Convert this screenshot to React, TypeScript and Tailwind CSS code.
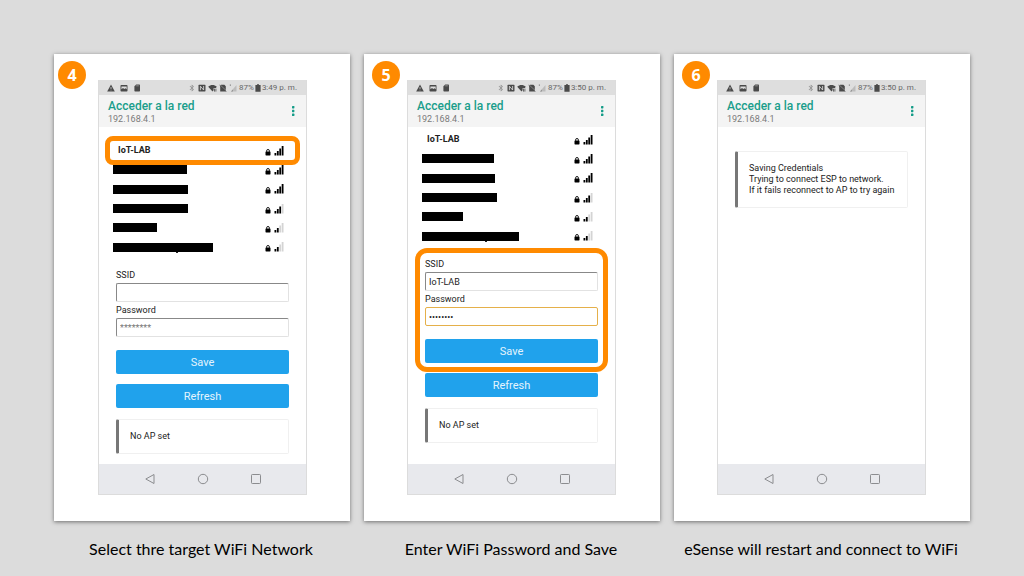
import { useId } from 'react';
import type { ReactNode } from 'react';
import { MdBluetooth } from 'react-icons/md';

type Network = { name?: string; redacted?: number; remnant?: boolean; strength: number };

const firstNetworks: Network[] = [
  { name: 'IoT-LAB', strength: 4 },
  { redacted: 74, strength: 4 },
  { redacted: 75, strength: 4 },
  { redacted: 75, strength: 3 },
  { redacted: 44, strength: 2 },
  { redacted: 100, strength: 2, remnant: true },
];

const secondNetworks: Network[] = [
  { name: 'IoT-LAB', strength: 4 },
  { redacted: 72, strength: 4 },
  { redacted: 73, strength: 4 },
  { redacted: 75, strength: 3 },
  { redacted: 41, strength: 2 },
  { redacted: 97, strength: 2, remnant: true },
];

function WarningIcon() {
  return (
    <svg viewBox="0 0 8 8" className="size-2" aria-hidden="true">
      <path fill="currentColor" d="M4 .6 7.800 7.400H.2z" />
      <path stroke="#dedede" strokeWidth=".7" d="M4 3v2M4 5.700v.7" />
    </svg>
  );
}

function PictureIcon() {
  return (
    <svg viewBox="0 0 8 8" className="size-2" aria-hidden="true">
      <path
        fillRule="evenodd"
        fill="currentColor"
        d="M1.3 1h5.4q.8 0 .8.8v4.900q0 .8-.8.8H1.300q-.8 0-.8-.8V1.800q0-.8.8-.8zM1.400 2.600v2.600l1.600-1.200 1.300 1 1.200-.8 1.200 1V2.600z"
      />
    </svg>
  );
}

function SdCardIcon() {
  return (
    <svg viewBox="0 0 8 8" className="size-2" aria-hidden="true">
      <path fill="currentColor" d="M3.200.500h3.100q.7 0 .7.7v5.600q0 .7-.7.7H2.100q-.7 0-.7-.7V2.300z" />
      <path stroke="#dedede" strokeWidth=".4" d="M3.300 1.200v1.200M4.500 1.200v1.200M5.700 1.200v1.200" />
    </svg>
  );
}

function NfcIcon() {
  return (
    <svg viewBox="0 0 8 8" className="size-2" aria-hidden="true">
      <rect x=".5" y=".8" width="7" height="6.600" rx=".6" fill="currentColor" />
      <path fill="none" stroke="#dedede" strokeWidth=".8" d="M2.400 6.200V2.200l3.200 3.800V2" />
    </svg>
  );
}

function WifiIcon() {
  return (
    <svg viewBox="0 0 9 8" className="h-2 w-[9px]" aria-hidden="true">
      <path fill="currentColor" d="M.2 2.800C2.600.5 6.400.5 8.800 2.800L7.900 4H5.600v2.200L4.500 7.500z" />
      <path stroke="currentColor" strokeWidth=".8" d="M6.500 4.600v3M7.900 4.600v3" />
    </svg>
  );
}

function MutedIcon() {
  return (
    <svg viewBox="0 0 8 8" className="size-2" aria-hidden="true">
      <path fill="currentColor" d="M2 .8h3.400l1.400 1.500v5.100H1.200V1.600z" />
      <path stroke="#dedede" strokeWidth=".6" d="m1.400 1.200 5.800 5.600" />
      <path stroke="currentColor" strokeWidth=".8" d="m.6 1.200 6.800 6.400" />
    </svg>
  );
}

function WeakSignalIcon() {
  return (
    <svg viewBox="0 0 8 8" className="size-2" aria-hidden="true">
      <path fill="#bcbcbc" d="M7.500 1v6.500H2z" />
      <path fill="#888" d="M.8.500h1.200v1.200H.8zM2 7.500l1.800-2v2z" />
    </svg>
  );
}

function BatteryIcon() {
  return (
    <svg viewBox="0 0 6 8" className="h-2 w-1.5" aria-hidden="true">
      <path fill="currentColor" d="M2 .2h2v.8h1.600v6.800H.4V1H2z" />
    </svg>
  );
}

function LockIcon() {
  return (
    <svg viewBox="0 0 6 8" className="h-2 w-1.5" aria-hidden="true">
      <rect x=".5" y="3.400" width="5" height="4" rx=".6" fill="#000" />
      <path fill="none" stroke="#000" strokeWidth=".9" d="M1.600 3.800V2.900a1.400 1.400 0 0 1 2.800 0v.9" />
    </svg>
  );
}

function StatusBar({ time }: { time: string }) {
  return (
    <div className="flex h-[15px] items-center justify-between bg-[#dedede] pr-[9px] pl-2 text-[#4a4a4a]">
      <div className="flex items-center gap-[5px]">
        <WarningIcon />
        <PictureIcon />
        <SdCardIcon />
      </div>
      <div className="flex items-center gap-0.5">
        <MdBluetooth className="size-2 text-[#8f8f8f]" />
        <NfcIcon />
        <WifiIcon />
        <MutedIcon />
        <WeakSignalIcon />
        <div className="flex items-center gap-px">
          <span className="text-[8px] leading-none text-[#666]">87%</span>
          <BatteryIcon />
          <span className="text-[8px] leading-none whitespace-nowrap text-[#666]">{time}</span>
        </div>
      </div>
    </div>
  );
}

function TitleBar() {
  return (
    <header className="flex h-8 items-center justify-between bg-[#f4f4f4] pr-[7px] pl-[9px]">
      <div className="pt-0.5">
        <h2 className="text-xs leading-[14px] font-medium text-[#1a9e8b]">Acceder a la red</h2>
        <p className="text-[9px] leading-3 text-[#7a7a7a]">192.168.4.1</p>
      </div>
      <button type="button" aria-label="More options" className="text-[#149c88]">
        <svg viewBox="0 0 12 12" className="size-3" fill="currentColor">
          <rect x="5" y="1" width="2.400" height="2.400" rx=".6" />
          <rect x="5" y="4.800" width="2.400" height="2.400" rx=".6" />
          <rect x="5" y="8.600" width="2.400" height="2.400" rx=".6" />
        </svg>
      </button>
    </header>
  );
}

function NavBar() {
  return (
    <nav className="mt-auto flex h-[30px] items-center justify-center gap-[41px] bg-[#e8e9ed] text-[#8b8c8f]">
      <button type="button" aria-label="Back">
        <svg viewBox="0 0 12 12" className="size-3" fill="none" stroke="currentColor">
          <path strokeLinejoin="round" d="M10 1.500v9L1.800 6z" />
        </svg>
      </button>
      <button type="button" aria-label="Home">
        <svg viewBox="0 0 12 12" className="size-3" fill="none" stroke="currentColor">
          <circle cx="6" cy="6" r="4.700" />
        </svg>
      </button>
      <button type="button" aria-label="Recent apps">
        <svg viewBox="0 0 12 12" className="size-3" fill="none" stroke="currentColor">
          <rect x="1.500" y="1.500" width="9" height="9" rx=".8" />
        </svg>
      </button>
    </nav>
  );
}

function Signal({ strength }: { strength: number }) {
  return (
    <svg viewBox="0 0 10 10" className="size-2.5" role="img" aria-label={`Signal ${strength} of 4`}>
      {[2.5, 4.5, 7, 9.5].map((height, i) => (
        <rect key={height} x={0.5 + i * 2.4} y={9.5 - height} width="1.800" height={height} fill={i < strength ? '#000' : '#d4d4d4'} />
      ))}
    </svg>
  );
}

function NetworkList({ networks }: { networks: Network[] }) {
  return (
    <ul className="grid h-[116px] grid-rows-6 pr-[22px] pl-3.5">
      {networks.map((network, i) => (
        <li key={i} className="flex items-center justify-between">
          {network.name ? (
            <a href="#ssid" className="pl-[5px] text-[9px] leading-none font-bold text-[#222]">
              {network.name}
            </a>
          ) : (
            <span className="relative h-[9px] bg-black" style={{ width: network.redacted }}>
              {network.remnant && <span className="absolute -bottom-px left-[63px] h-px w-0.5 bg-[#222]" />}
            </span>
          )}
          <span className="flex items-end gap-[3px]">
            <LockIcon />
            <Signal strength={network.strength} />
          </span>
        </li>
      ))}
    </ul>
  );
}

const actionClass = 'h-6 w-full rounded-xs bg-[#20a2ec] text-[11px] leading-none text-[#e4f4fd]';
const fieldClass =
  'h-[19px] w-full rounded-xs border border-[#e2e2e2] border-t-[#888] border-l-[#888] bg-white px-[3px] text-[9px] text-[#222] outline-none placeholder:text-[#777]';
const activeFieldClass =
  'h-[19px] w-full rounded-xs border border-[#e5b04a] bg-white px-[3px] text-[9px] text-[#222] outline-none';

function CredentialsForm({ ssid, password, highlighted }: { ssid?: string; password?: string; highlighted?: boolean }) {
  const id = useId();
  return (
    <form className="px-[17px]" onSubmit={(event) => event.preventDefault()}>
      <div className="relative">
        <label htmlFor={`${id}-ssid`} className="block h-4 text-[9px] leading-4 text-[#222]">
          SSID
        </label>
        <input id={`${id}-ssid`} defaultValue={ssid} className={`block ${fieldClass}`} />
        <label htmlFor={`${id}-password`} className="block h-4 text-[9px] leading-4 text-[#222]">
          Password
        </label>
        <input
          id={`${id}-password`}
          type="password"
          placeholder="********"
          defaultValue={password}
          className={`block ${highlighted ? activeFieldClass : fieldClass}`}
        />
        <button type="submit" className={`mt-[13px] block ${actionClass}`}>
          Save
        </button>
        {highlighted && (
          <div className="pointer-events-none absolute -inset-x-[10px] -top-2 -bottom-[9px] rounded-xl border-5 border-[#ff8a00]" />
        )}
      </div>
      <button type="button" className={`mt-2.5 block ${actionClass}`}>
        Refresh
      </button>
    </form>
  );
}

function Message({ lines }: { lines: string[] }) {
  return (
    <div className="mx-[17px] rounded-xs border border-l-3 border-[#f0f0f0] border-l-[#777] py-[11px] pl-[11px] text-[9px] leading-[11px] whitespace-nowrap text-[#222]">
      {lines.map((line) => (
        <p key={line}>{line}</p>
      ))}
    </div>
  );
}

type StepProps = { number: number; time: string; caption: string; first?: boolean; children: ReactNode };

function Step({ number, time, caption, first, children }: StepProps) {
  return (
    <figure className="flex flex-col">
      <div
        className={`relative flex grow flex-col bg-white py-[26px] shadow-[0_1px_4px_rgba(0,0,0,0.5)] ${first ? 'pr-[43px] pl-11' : 'pr-11 pl-[43px]'}`}
      >
        <span
          className={`absolute top-[7px] flex size-7 items-center justify-center rounded-full bg-[#ff8a00] font-['Open_Sans',sans-serif] text-base font-bold text-white ${first ? 'left-1' : 'left-2'}`}
        >
          {number}
        </span>
        <section className="flex grow flex-col border border-t-0 border-[#dcdcdc] font-[Roboto,sans-serif]">
          <StatusBar time={time} />
          <TitleBar />
          {children}
          <NavBar />
        </section>
      </div>
      <figcaption className="pt-[17px] pr-0.5 text-center font-[Lato,sans-serif] text-base leading-[22px] whitespace-nowrap text-black">
        {caption}
      </figcaption>
    </figure>
  );
}

export default function App() {
  return (
    <main className="min-h-screen bg-[#dcdcdc] px-[54px] pt-[54px]">
      <div className="grid grid-cols-3 gap-3.5">
        <Step number={4} time="3:49 p. m." caption="Select thre target WiFi Network" first>
          <div className="relative mt-3.5 mb-[10px]">
            <NetworkList networks={firstNetworks} />
            <div className="pointer-events-none absolute -top-[5px] right-[6px] left-[6px] h-[29px] rounded-lg border-5 border-[#ff8a00]" />
          </div>
          <CredentialsForm />
          <div className="mt-[11px] mb-[10px]">
            <Message lines={['No AP set']} />
          </div>
        </Step>
        <Step number={5} time="3:50 p. m." caption="Enter WiFi Password and Save">
          <div className="mt-[3px] mb-[10px]">
            <NetworkList networks={secondNetworks} />
          </div>
          <CredentialsForm ssid="IoT-LAB" password="password" highlighted />
          <div className="mt-[11px]">
            <Message lines={['No AP set']} />
          </div>
        </Step>
        <Step number={6} time="3:50 p. m." caption="eSense will restart and connect to WiFi">
          <div className="mt-6">
            <Message lines={['Saving Credentials', 'Trying to connect ESP to network.', 'If it fails reconnect to AP to try again']} />
          </div>
        </Step>
      </div>
    </main>
  );
}
